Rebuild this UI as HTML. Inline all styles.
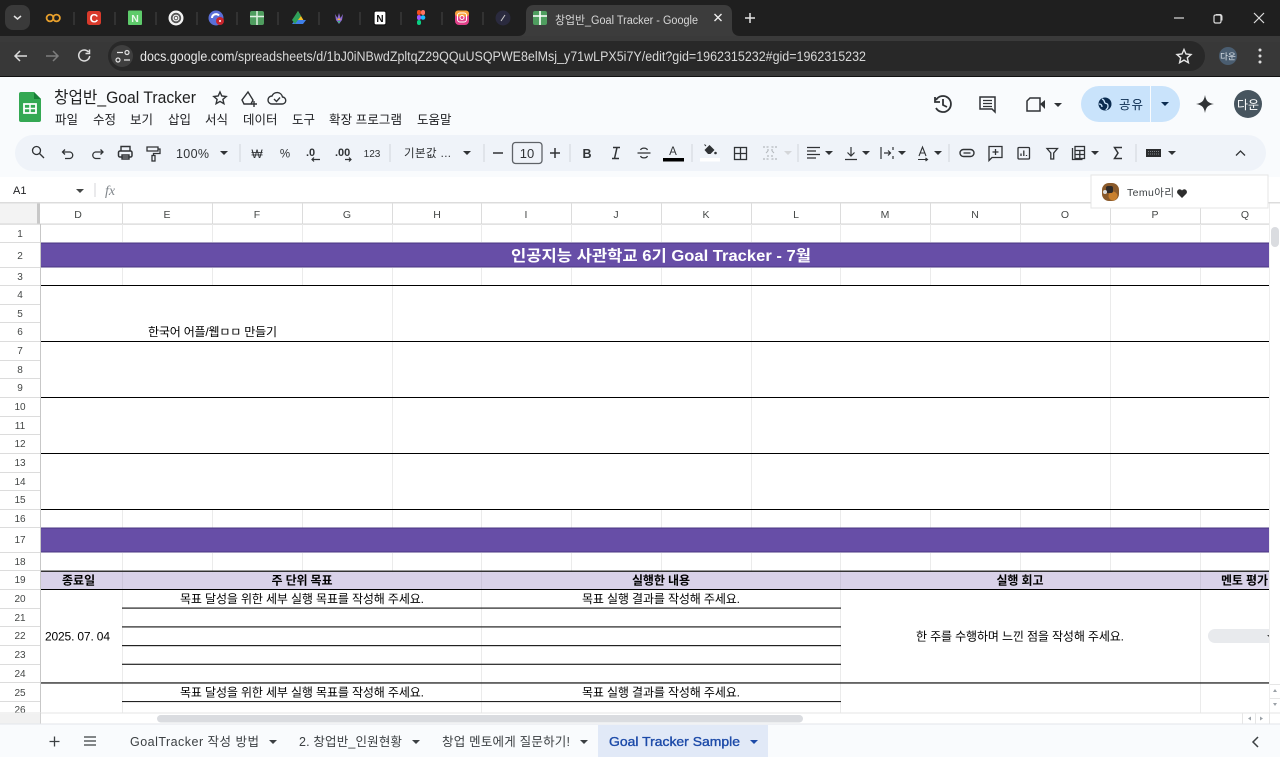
<!DOCTYPE html>
<html lang="ko"><head><meta charset="utf-8"><title>창업반_Goal Tracker</title>
<style>
html,body{margin:0;padding:0;background:#fff;overflow:hidden}
svg{display:block;position:absolute;left:0;top:0;filter:blur(.25px)}
text{font-family:"Liberation Sans","Noto Sans CJK KR",sans-serif;dominant-baseline:auto}
.m{font-size:12.5px;fill:#202124}
.h{font-size:10.5px;fill:#444746;text-anchor:middle}
.r{font-size:10px;fill:#444746;text-anchor:middle}
.c{font-size:12px;fill:#000}
.b{font-size:12px;fill:#000;font-weight:700}
.i{fill:none;stroke:#303336;stroke-width:1.4}
.tab{font-size:12.5px;fill:#3c4043}
</style></head><body>
<svg width="1280" height="757" viewBox="0 0 1280 757" xmlns="http://www.w3.org/2000/svg">
<!-- Chrome -->
<rect width="1280" height="36" fill="#1f1f1f"/>
<rect x="5" y="5" width="25" height="25" rx="8" fill="#3a3a3a"/>
<path d="M14 16l3.500 3 3.500-3" fill="none" stroke="#e3e3e3" stroke-width="1.500"/>
<g stroke="#444" stroke-width="1"><path d="M74 12v13M115 12v13M156 12v13M197 12v13M237 12v13M278 12v13M319 12v13M360 12v13M401 12v13M442 12v13M483 12v13"/></g>
<circle cx="50" cy="18" r="3.400" fill="none" stroke="#e8a02c" stroke-width="1.800"/><circle cx="56.500" cy="18" r="3.400" fill="none" stroke="#e8a02c" stroke-width="1.800"/>
<rect x="87" y="11" width="14" height="14" rx="2.500" fill="#d93a2b"/><text x="94" y="22.500" font-size="12" font-weight="700" fill="#fff" text-anchor="middle">C</text>
<rect x="128" y="10.500" width="14" height="14.500" rx="1" fill="#5ecb6b"/><text x="135" y="22" font-size="10.500" font-weight="700" fill="#e8f8ea" text-anchor="middle">N</text>
<circle cx="176" cy="18" r="7.500" fill="#f4f4f4"/><circle cx="176" cy="18" r="4.300" fill="none" stroke="#555" stroke-width="1.800"/><circle cx="176" cy="18" r="1.800" fill="none" stroke="#555"/>
<circle cx="216" cy="18" r="7.500" fill="#5a6fd8"/><path d="M212 18a4 4 0 0 1 7-2.500" fill="none" stroke="#fff" stroke-width="2"/><circle cx="220" cy="21" r="4" fill="#c9252d"/><circle cx="220" cy="21" r="1" fill="#fff"/>
<rect x="250" y="11" width="14" height="14" rx="2" fill="#4f9d5f"/><path d="M257 11v14M250 16.500h14" stroke="#dff0e2" stroke-width="1.500"/>
<path d="M298 11l6 10h-6l-3-5z" fill="#f6c026"/><path d="M292 24l3-4h11l-3 4z" fill="#3f7fe8"/><path d="M298 11l3 5-6 8-3-4z" fill="#2fa05a"/>
<path d="M335 14l2.500 4 1.500-5 1.500 5 2.500-4-1 6-3 4-3-4z" fill="#8d6ad0"/><path d="M339 18l-2 2h4z" fill="#f2b33c"/><path d="M337.500 21l1.500 2.500 1.500-2.500z" fill="#3cb87a"/>
<rect x="374" y="11" width="12" height="14" rx="2" fill="#fff" stroke="#111" stroke-width="1.200"/><text x="380" y="22" font-size="10" font-weight="700" fill="#111" text-anchor="middle">N</text>
<rect x="417" y="10" width="4" height="5" rx="2" fill="#f24e1e"/><rect x="421" y="10" width="4" height="5" rx="2" fill="#ff7262"/><rect x="417" y="15" width="4" height="5" rx="2" fill="#a259ff"/><circle cx="423" cy="17.500" r="2.300" fill="#1abcfe"/><rect x="417" y="20" width="4" height="5" rx="2" fill="#0acf83"/>
<rect x="455" y="10.500" width="14" height="14.500" rx="4" fill="#e1408a"/><rect x="455" y="10.500" width="14" height="6" rx="3" fill="#f7a13a"/><rect x="457.500" y="13" width="9" height="9" rx="2.500" fill="none" stroke="#fff"/><circle cx="462" cy="17.500" r="2" fill="none" stroke="#fff"/>
<circle cx="503" cy="18" r="7.500" fill="#2a2a3e"/><path d="M501 21l4-6" stroke="#ccc"/>
<path d="M518 36c5 0 8-3 8-8v-15c0-5 3-8 8-8h190c5 0 8 3 8 8v15c0 5 3 8 8 8z" fill="#3c3c3c"/>
<rect x="533" y="11" width="14" height="14" rx="2" fill="#4f9d5f"/><path d="M540 11v14M533 16h14" stroke="#fff" stroke-width="1.600"/>
<text x="555" y="24" font-size="11.500" fill="#d6d6d6" textLength="143" lengthAdjust="spacingAndGlyphs">창업반_Goal Tracker - Google</text>
<rect x="699" y="10" width="12" height="18" fill="#3c3c3c"/>
<path d="M714.500 14l7 7M721.500 14l-7 7" stroke="#eee" stroke-width="1.400"/>
<path d="M750 13v10M745 18h10" stroke="#e3e3e3" stroke-width="1.500"/>
<path d="M1174 18h10" stroke="#ddd" stroke-width="1.200"/>
<rect x="1214" y="15" width="7" height="8" rx="1.500" fill="none" stroke="#ddd" stroke-width="1.200"/><path d="M1216 14.500h4a2 2 0 0 1 2 2v4" fill="none" stroke="#ddd"/>
<path d="M1254 13l10 10M1264 13l-10 10" stroke="#ddd" stroke-width="1.200"/>
<rect y="36" width="1280" height="40" fill="#383838"/>
<rect y="36" width="1280" height="6" fill="#3a3a3a"/>
<rect y="76" width="1280" height="1" fill="#111"/>
<path d="M27 56h-12M20 51l-5 5 5 5" fill="none" stroke="#dcdcdc" stroke-width="1.500"/>
<path d="M58 56h-12M53 51l5 5-5 5" fill="none" stroke="#7d7d7d" stroke-width="1.500"/>
<path d="M88.500 52a5.500 5.500 0 1 0 1.200 4M89.500 49.500v4h-4" fill="none" stroke="#dcdcdc" stroke-width="1.500"/>
<rect x="108" y="41" width="1097" height="30" rx="15" fill="#282828"/>
<circle cx="122" cy="56" r="11" fill="#3f3f3f"/>
<path d="M117 52.500h6M124 60h6" stroke="#e3e3e3" stroke-width="1.300"/><circle cx="118" cy="60" r="2" fill="none" stroke="#e3e3e3" stroke-width="1.200"/><circle cx="127" cy="52.500" r="2" fill="none" stroke="#e3e3e3" stroke-width="1.200"/>
<text x="140" y="61" font-size="13.500" fill="#d8d8d8" textLength="726" lengthAdjust="spacingAndGlyphs"><tspan fill="#e8e8e8">docs.google.com</tspan>/spreadsheets/d/1bJ0iNBwdZpltqZ29QQuUSQPWE8elMsj_y71wLPX5i7Y/edit?gid=1962315232#gid=1962315232</text>
<path d="M1184 49.500l2 4.500 5 .500-3.700 3.300 1.100 4.900-4.400-2.600-4.400 2.600 1.100-4.900-3.700-3.300 5-.500z" fill="none" stroke="#e6e6e6" stroke-width="1.400"/>
<circle cx="1228" cy="56" r="9" fill="#4a5d70"/><text x="1228" y="59.500" font-size="8.500" fill="#dfe6ec" text-anchor="middle">다운</text>
<circle cx="1260" cy="50" r="1.500" fill="#ddd"/><circle cx="1260" cy="56" r="1.500" fill="#ddd"/><circle cx="1260" cy="62" r="1.500" fill="#ddd"/>
<!-- Docs header -->
<rect y="77" width="1280" height="100" fill="#f9fbfd"/>
<path d="M21 92h13l7 7v21a2 2 0 0 1-2 2H21a2 2 0 0 1-2-2V94a2 2 0 0 1 2-2z" fill="#34a853"/><path d="M34 92l7 7h-7z" fill="#188038"/>
<path d="M24 104h12v9H24z" fill="none" stroke="#fff" stroke-width="1.800"/><path d="M30 104v9M24 108.500h12" stroke="#fff" stroke-width="1.500"/>
<text x="54" y="103" font-size="16.500" fill="#1f1f1f" textLength="142" lengthAdjust="spacingAndGlyphs">창업반_Goal Tracker</text>
<path d="M220 92l1.800 4 4.400.500-3.300 2.900 1 4.300-3.900-2.300-3.900 2.300 1-4.300-3.300-2.900 4.400-.500z" class="i" stroke-width="1.200"/>
<path d="M248 92l5 8-2 4h-7l-2-4z" class="i" stroke-width="1.200"/><path d="M254 101v6M251 104h6" class="i" stroke-width="1.200"/>
<path d="M272 104h10a3.500 3.500 0 0 0 .500-7 5.500 5.500 0 0 0-10.500-1 4 4 0 0 0 0 8z" class="i" stroke-width="1.200"/><path d="M274 99l2.500 2.500 3.500-4" class="i" stroke-width="1.100"/>
<text x="55" y="124" class="m">파일</text><text x="93" y="124" class="m">수정</text><text x="130" y="124" class="m">보기</text><text x="168" y="124" class="m">삽입</text><text x="205" y="124" class="m">서식</text><text x="243" y="124" class="m">데이터</text><text x="292" y="124" class="m">도구</text><text x="329" y="124" class="m" textLength="73">확장 프로그램</text><text x="417" y="124" class="m">도움말</text>
<path d="M936 100a8 8 0 1 1 0 8M935 97v5h5M943 99v6l4 2" fill="none" stroke="#303336" stroke-width="1.800"/>
<path d="M980 97h15v15l-3-3h-12z" fill="none" stroke="#303336" stroke-width="1.500"/><path d="M983 100.500h9M983 103.500h9M983 106.500h9" stroke="#303336" stroke-width="1.200"/>
<path d="M1030 98h10v13h-13v-10z" fill="none" stroke="#303336" stroke-width="1.500"/><path d="M1040 104l5-4v9z" fill="#303336"/><path d="M1054 103h8l-4 4z" fill="#303336"/>
<rect x="1081" y="86" width="99" height="36" rx="18" fill="#c9e3fb"/><rect x="1150" y="86" width="1" height="36" fill="#f9fbfd"/>
<circle cx="1105" cy="104" r="6.500" fill="#0b2c50"/><path d="M1102 99c3 1 2 3 3 4s3 0 3 3-2 3-2 4M1099 104c2 0 3 1 3 3" fill="none" stroke="#c9e3fb" stroke-width="1.300"/>
<text x="1119" y="109" font-size="12.500" fill="#0b2c50" textLength="24">공유</text>
<path d="M1161 102h8l-4 4z" fill="#0b2c50"/>
<path d="M1205 95c1 6 3 8 9 9-6 1-8 3-9 9-1-6-3-8-9-9 6-1 8-3 9-9z" fill="#303336"/>
<ellipse cx="1248" cy="104" rx="14" ry="14" fill="#47555f"/><text x="1248" y="109" font-size="12" fill="#fff" text-anchor="middle">다운</text>
<!-- Toolbar -->
<rect x="15" y="135" width="1251" height="36" rx="18" fill="#eff3f9"/>
<g fill="none" stroke="#303336" stroke-width="1.300">
<circle cx="36.500" cy="150.500" r="4"/><path d="M39.500 153.500l4.500 4.500"/>
<path d="M65 149.500l-2.500 2.500 2.500 2.500M63 152h7a3.300 3.300 0 0 1 0 6.500h-5"/>
<path d="M100.500 149.500l2.500 2.500-2.500 2.500M102.500 152h-7a3.300 3.300 0 0 0 0 6.500h5"/>
<rect x="118.500" y="151" width="13.500" height="6" rx="1.500" stroke-width="1.500"/><path d="M121 151v-4.500h9v4.500M122 155h7v4h-7z" stroke-width="1.400"/>
<path d="M147 147h11v4h-11zM158 149h2v4.500h-6.500v2"/><rect x="152" y="155.500" width="3" height="5.500" stroke-width="1.300"/>
<path d="M320 159.500h-8M314 157.500l-2 2 2 2M345 159.500h6M349 157.500l2 2-2 2" stroke-width="1.200" />
<rect x="512.500" y="142.500" width="29.500" height="21" rx="3" stroke="#5f6368"/>
<path d="M493 153h10M555 148v10M550 153h10" stroke-width="1.500"/>
<path d="M613 147.500h7M612 158.500h7M617 147.500l-2.500 11" stroke-width="1.500"/>
<path d="M637.500 153h13M640.500 150c1-2.500 6-2.500 7 0M640.500 156c1 2.500 6 2.500 7 0" stroke-width="1.200"/>
<rect x="734.500" y="147.500" width="12" height="12"/><path d="M740.500 147.500v12M734.500 153.500h12"/>
<path d="M807 147.500h13M807 151h9M807 154.500h13M807 158h9" stroke-width="1.300"/>
<path d="M851 147v9M847.500 152.500l3.500 3.500 3.500-3.500M845 159.500h12" stroke-width="1.200"/>
<path d="M881 147v12M884 153h6M888 150.500l2.500 2.500-2.500 2.500M893 147v3M893 156v3" stroke-width="1.200"/>
<path d="M919 156l3.500-9 3.500 9M920 153h5M918 159.500h9M925.500 158l2 1.500-2 1.500" stroke-width="1.100"/>
<rect x="960" y="149.500" width="14" height="7" rx="3.500" stroke-width="1.400"/><path d="M963.500 153h7"/>
<path d="M989 146.500h13v11h-10l-3 3zM995.500 149v6M992.500 152h6"/>
<rect x="1018" y="147.500" width="11.500" height="11.500" rx="1"/><path d="M1021 156v-2.500M1023.800 156v-5.500M1026.500 156v-1"/>
<path d="M1047 148.500h10.500l-3.800 4.500v6h-2.900v-6z"/>
<path d="M1072.500 148v11.500h10"/><rect x="1075" y="146.500" width="9.500" height="12" fill="#eff3f9"/><path d="M1075 150.500h9.500M1075 154.500h9.500M1079.800 150.500v8"/>
<path d="M1122 147.500h-7.500l3.500 5.500-3.500 5.500h7.500" stroke-width="1.500"/>
<path d="M1236 155.500l4.500-4.500 4.500 4.500"/>
</g>
<g fill="none" stroke="#b4b8bd" stroke-width="1.200" stroke-dasharray="2 1.500"><path d="M763 147h5v4M777 147h-5v4M763 159h5v-4M777 159h-5v-4"/></g>
<path d="M766 153l2-2M774 153l-2-2" stroke="#b4b8bd" fill="none"/>
<g fill="#d4d6d9"><path d="M792 151h-8l4 4z"/></g>
<g stroke="#d2d6db" stroke-width="1"><path d="M240 144v18M390 144v18M484 144v18M570 144v18M692 144v18M798 144v18M949 144v18M1136 144v18"/></g>
<text x="176" y="158" font-size="12.500" fill="#303336" textLength="33">100%</text>
<text x="257" y="158" font-size="12" fill="#303336" text-anchor="middle">₩</text>
<text x="285" y="157.500" font-size="11.500" fill="#303336" text-anchor="middle">%</text>
<text x="306" y="156" font-size="11" font-weight="700" fill="#303336">.0</text>
<text x="335" y="156" font-size="11" font-weight="700" fill="#303336">.00</text>
<text x="372" y="157" font-size="10" fill="#303336" text-anchor="middle">123</text>
<text x="404" y="157" font-size="11.500" fill="#303336" textLength="47">기본값 ...</text>
<text x="527" y="158" font-size="13" fill="#303336" text-anchor="middle">10</text>
<text x="587" y="158" font-size="12.500" font-weight="700" fill="#303336" text-anchor="middle">B</text>
<text x="673" y="155" font-size="11.500" fill="#303336" text-anchor="middle">A</text>
<rect x="663" y="158" width="21" height="3.500" fill="#000"/>
<rect x="700" y="158" width="20" height="3.500" fill="#fff"/>
<circle cx="715.500" cy="153" r="1.300" fill="#303336"/><path d="M704.500 150l5-5 5 5-4 4h-2.500z" fill="#303336"/><path d="M706 146l-1.500-1.500" stroke="#303336" fill="none"/>
<g fill="#303336"><path d="M220 151h8l-4 4zM463 151h8l-4 4zM825 151h8l-4 4zM862 151h8l-4 4zM898 151h8l-4 4zM934 151h8l-4 4zM1091 151h8l-4 4zM1168 151h8l-4 4z"/></g>
<rect x="1146" y="149" width="15" height="8" fill="#2a2c2e"/><path d="M1148 151.500h11M1148 154h11" stroke="#9aa0a6" stroke-width=".8" stroke-dasharray="1 1"/>
<!-- Formula bar -->
<rect y="177" width="1280" height="26" fill="#fff"/>
<text x="13" y="194" font-size="11" fill="#202124">A1</text>
<path d="M76 189h8l-4 4z" fill="#444746"/>
<rect x="94.500" y="183" width="1" height="14" fill="#d4d6d9"/>
<text x="105" y="195" font-family="Liberation Serif" style="font-family:'Liberation Serif',serif" font-style="italic" font-size="14" fill="#80868b">fx</text>
<rect y="202" width="1280" height="1.500" fill="#dcdcdc"/>
<!-- Grid base -->
<rect y="203.500" width="1280" height="510" fill="#fff"/>
<rect y="203.500" width="40" height="21" fill="#f3f3f3"/>
<rect x="37" y="203.500" width="3" height="21" fill="#c8c8c8"/>
<rect x="40" y="203.500" width="1229" height="20.500" fill="#fff"/>
<rect y="223.500" width="1269" height="1.200" fill="#d6d6d6"/>
<rect x="40" y="224" width="1" height="490" fill="#c7c7c7"/>
<g stroke="#dcdcdc" stroke-width="1"><path d="M122.500 203.500v20M212.500 203.500v20M302.500 203.500v20M392.500 203.500v20M481.500 203.500v20M571.500 203.500v20M661.500 203.500v20M751.500 203.500v20M840.500 203.500v20M930.500 203.500v20M1020.500 203.500v20M1110.500 203.500v20M1200.500 203.500v20"/></g>
<g class="h"><text class="h" x="78" y="218">D</text><text class="h" x="167" y="218">E</text><text class="h" x="257" y="218">F</text><text class="h" x="347" y="218">G</text><text class="h" x="437" y="218">H</text><text class="h" x="526" y="218">I</text><text class="h" x="616" y="218">J</text><text class="h" x="706" y="218">K</text><text class="h" x="796" y="218">L</text><text class="h" x="885" y="218">M</text><text class="h" x="975" y="218">N</text><text class="h" x="1065" y="218">O</text><text class="h" x="1155" y="218">P</text><text class="h" x="1245" y="218">Q</text></g>
<!-- row header lines -->
<g stroke="#dcdcdc" stroke-width="1"><path d="M0 242.500h40M0 267.500h40M0 285.500h40M0 304.500h40M0 322.500h40M0 341.500h40M0 360.500h40M0 378.500h40M0 397.500h40M0 416.500h40M0 434.500h40M0 453.500h40M0 472.500h40M0 490.500h40M0 509.500h40M0 527.500h40M0 552.500h40M0 570.500h40M0 589.500h40M0 608.500h40M0 626.500h40M0 645.500h40M0 664.500h40M0 682.500h40M0 701.500h40"/></g>
<text class="r" x="20" y="237">1</text><text class="r" x="20" y="259">2</text><text class="r" x="20" y="280">3</text><text class="r" x="20" y="298">4</text><text class="r" x="20" y="317">5</text><text class="r" x="20" y="335">6</text><text class="r" x="20" y="354">7</text><text class="r" x="20" y="373">8</text><text class="r" x="20" y="391">9</text><text class="r" x="20" y="410">10</text><text class="r" x="20" y="429">11</text><text class="r" x="20" y="447">12</text><text class="r" x="20" y="466">13</text><text class="r" x="20" y="485">14</text><text class="r" x="20" y="503">15</text><text class="r" x="20" y="522">16</text><text class="r" x="20" y="543">17</text><text class="r" x="20" y="565">18</text><text class="r" x="20" y="583">19</text><text class="r" x="20" y="602">20</text><text class="r" x="20" y="621">21</text><text class="r" x="20" y="639">22</text><text class="r" x="20" y="658">23</text><text class="r" x="20" y="677">24</text><text class="r" x="20" y="696">25</text><text class="r" x="20" y="713">26</text>
<!-- light cell lines -->
<g stroke="#ebebeb" stroke-width="1"><path d="M122.500 224v18M212.500 224v18M302.500 224v18M392.500 224v18M481.500 224v18M571.500 224v18M661.500 224v18M751.500 224v18M840.500 224v18M930.500 224v18M1020.500 224v18M1110.500 224v18M1200.500 224v18"/>
<path d="M122.500 268v17M212.500 268v17M302.500 268v17M392.500 268v17M481.500 268v17M571.500 268v17M661.500 268v17M751.500 268v17M840.500 268v17M930.500 268v17M1020.500 268v17M1110.500 268v17M1200.500 268v17"/>
<path d="M392.500 286v223M751.500 286v223M1110.500 286v223"/>
<path d="M122.500 510v18M212.500 510v18M302.500 510v18M392.500 510v18M481.500 510v18M571.500 510v18M661.500 510v18M751.500 510v18M840.500 510v18M930.500 510v18M1020.500 510v18M1110.500 510v18M1200.500 510v18"/>
<path d="M122.500 553v18M212.500 553v18M302.500 553v18M392.500 553v18M481.500 553v18M571.500 553v18M661.500 553v18M751.500 553v18M840.500 553v18M930.500 553v18M1020.500 553v18M1110.500 553v18M1200.500 553v18"/>
<path d="M122.500 590v123M481.500 590v123M840.500 590v123M1200.500 590v123"/></g>
<!-- purple bands -->
<rect x="41" y="242.500" width="1228" height="25" fill="#674ea7"/><rect x="41" y="242.500" width="1228" height="1" fill="#4a3580"/><rect x="41" y="266.500" width="1228" height="1" fill="#4a3580"/>
<text x="661" y="261" font-size="15.500" font-weight="700" fill="#fff" text-anchor="middle" textLength="300" lengthAdjust="spacingAndGlyphs">인공지능 사관학교 6기 Goal Tracker - 7월</text>
<rect x="41" y="527.500" width="1228" height="25" fill="#674ea7"/><rect x="41" y="527.500" width="1228" height="1" fill="#4a3580"/><rect x="41" y="551.500" width="1228" height="1" fill="#4a3580"/>
<!-- black rules -->
<g fill="#000"><rect x="41" y="285" width="1228" height="1"/><rect x="41" y="341" width="1228" height="1"/><rect x="41" y="397" width="1228" height="1"/><rect x="41" y="453" width="1228" height="1"/><rect x="41" y="509" width="1228" height="1"/></g>
<rect x="41" y="572" width="1228" height="17" fill="#d9d2e9"/>
<rect x="41" y="570.500" width="1228" height="1.500" fill="#333"/>
<rect x="41" y="589" width="1228" height="1" fill="#000"/>
<g fill="#cbc5da"><rect x="122" y="572" width="1" height="17"/><rect x="481" y="572" width="1" height="17"/><rect x="840" y="572" width="1" height="17"/><rect x="1200" y="572" width="1" height="17"/></g>
<g fill="#222"><rect x="122" y="607.500" width="719" height="1.200"/><rect x="122" y="626.300" width="719" height="1.200"/><rect x="122" y="645" width="719" height="1.200"/><rect x="122" y="663.700" width="719" height="1.200"/><rect x="41" y="682.300" width="1228" height="1.300"/><rect x="122" y="701" width="719" height="1.100"/></g>
<text class="c" x="148" y="336" textLength="129">한국어 어플/웹ㅁㅁ 만들기</text>
<text class="b" x="62" y="584.500" font-size="12">종료일</text>
<text class="b" x="302" y="584.500" text-anchor="middle" textLength="61">주 단위 목표</text>
<text class="b" x="661" y="584.500" text-anchor="middle" textLength="58">실행한 내용</text>
<text class="b" x="1020" y="584.500" text-anchor="middle" textLength="47">실행 회고</text>
<text class="b" x="1221" y="584.500" textLength="47">멘토 평가</text>
<text class="c" x="180" y="603" textLength="244">목표 달성을 위한 세부 실행 목표를 작성해 주세요.</text>
<text class="c" x="582" y="603" textLength="158">목표 실행 결과를 작성해 주세요.</text>
<text class="c" x="180" y="696.500" textLength="244">목표 달성을 위한 세부 실행 목표를 작성해 주세요.</text>
<text class="c" x="582" y="696.500" textLength="158">목표 실행 결과를 작성해 주세요.</text>
<text class="c" x="45" y="640.500" textLength="65">2025. 07. 04</text>
<text class="c" x="916" y="640.500" textLength="208">한 주를 수행하며 느낀 점을 작성해 주세요.</text>
<rect x="1208" y="629" width="70" height="14" rx="7" fill="#e8eaed"/>
<path d="M1267 635h4l-2 2z" fill="#444"/>
<!-- scrollbars -->
<rect x="1269" y="203.500" width="11" height="510" fill="#fff"/>
<rect x="1269" y="203.500" width="1" height="510" fill="#eee"/>
<rect x="1271" y="227" width="8" height="20" rx="4" fill="#dadce0"/>
<path d="M1273 692h4l-2-3zM1273 703h4l-2 3z" fill="#9aa0a6"/>
<rect x="1270" y="698" width="10" height="1" fill="#e6e6e6"/>
<rect x="1270" y="684" width="10" height="1" fill="#e6e6e6"/>
<rect y="713" width="1280" height="11" fill="#fff"/>
<rect y="712.500" width="1280" height="1" fill="#e6e6e6"/>
<rect y="714" width="40" height="10" fill="#f1f1f1"/>
<rect x="40" y="713" width="1" height="11" fill="#d0d0d0"/>
<rect x="157" y="715" width="646" height="7.500" rx="3.700" fill="#dadce0"/>
<path d="M1251 716.500v4l-3-2zM1260 716.500v4l3-2z" fill="#9aa0a6"/>
<rect x="1242" y="713" width="1" height="11" fill="#e6e6e6"/><rect x="1255" y="713" width="1" height="11" fill="#e6e6e6"/><rect x="1269" y="713" width="1" height="11" fill="#e6e6e6"/>
<!-- sheet tabs -->
<rect y="724" width="1280" height="33" fill="#f9fbfd"/><rect y="723.500" width="1280" height="1" fill="#e3e6ea"/>
<path d="M54.500 736.500v10M49.500 741.500h10M84 737h12M84 741h12M84 745h12" stroke="#3c4043" stroke-width="1.300" fill="none"/>
<text class="tab" x="130" y="746" textLength="129">GoalTracker 작성 방법</text>
<text class="tab" x="299" y="746" textLength="103">2. 창업반_인원현황</text>
<text class="tab" x="442" y="746" textLength="128">창업 멘토에게 질문하기!</text>
<rect x="598" y="725" width="170" height="32" fill="#e1e9f7"/>
<text x="609" y="746" font-size="12.500" fill="#1c4aa8" stroke="#1c4aa8" stroke-width=".35" textLength="131" lengthAdjust="spacingAndGlyphs">Goal Tracker Sample</text>
<path d="M269 740h8l-4 4zM412 740h8l-4 4zM580 740h8l-4 4z" fill="#3c4043"/><path d="M750 740h8l-4 4z" fill="#1c4aa8"/>
<path d="M1258 737l-5 5 5 5" fill="none" stroke="#3c4043" stroke-width="1.500"/>
<!-- popover -->
<rect x="1091" y="175" width="177" height="33" fill="#fff" stroke="#e5e5e5" stroke-width="1"/>
<rect x="1102" y="183" width="17" height="18" rx="7" fill="#8a5a2b"/><circle cx="1113" cy="196" r="4.500" fill="#c9802e"/><rect x="1106" y="186" width="7" height="7" rx="2" fill="#2f2a28"/><circle cx="1105" cy="192" r="2" fill="#ddd"/>
<text x="1127" y="196" font-size="10.500" fill="#3c4043" textLength="47">Temu아리</text>
<path d="M1182 198l-4.500-4.500a2.700 2.700 0 0 1 4.500-3 2.700 2.700 0 0 1 4.500 3z" fill="#2d2d2d"/>
</svg>
</body></html>
